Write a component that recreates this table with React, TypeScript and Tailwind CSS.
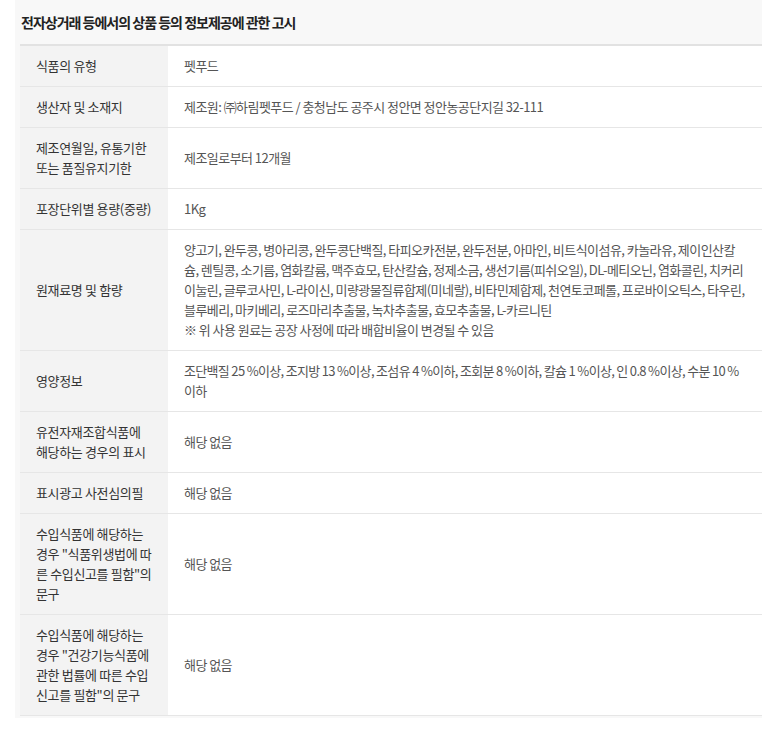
const rows: { label: string; value: React.ReactNode; tight?: boolean }[] = [
  { label: "식품의 유형", value: "펫푸드" },
  { label: "생산자 및 소재지", value: "제조원: ㈜하림펫푸드 / 충청남도 공주시 정안면 정안농공단지길 32-111" },
  { label: "제조연월일, 유통기한 또는 품질유지기한", value: "제조일로부터 12개월" },
  { label: "포장단위별 용량(중량)", value: "1Kg" },
  {
    label: "원재료명 및 함량",
    value: (
      <>
        양고기, 완두콩, 병아리콩, 완두콩단백질, 타피오카전분, 완두전분, 아마인, 비트식이섬유, 카놀라유, 제이인산칼슘, 렌틸콩, 소기름, 염화칼륨, 맥주효모, 탄산칼슘, 정제소금, 생선기름(피쉬오일), DL-메티오닌, 염화콜린, 치커리이눌린, 글루코사민, L-라이신, 미량광물질류합제(미네랄), 비타민제합제, 천연토코페롤, 프로바이오틱스, 타우린, 블루베리, 마키베리, 로즈마리추출물, 녹차추출물, 효모추출물, L-카르니틴
        <br />※ 위 사용 원료는 공장 사정에 따라 배합비율이 변경될 수 있음
      </>
    ),
  },
  {
    label: "영양정보",
    value: "조단백질 25 %이상, 조지방 13 %이상, 조섬유 4 %이하, 조회분 8 %이하, 칼슘 1 %이상, 인 0.8 %이상, 수분 10 %이하",
    tight: true,
  },
  { label: "유전자재조합식품에 해당하는 경우의 표시", value: "해당 없음" },
  { label: "표시광고 사전심의필", value: "해당 없음" },
  { label: "수입식품에 해당하는 경우 \"식품위생법에 따른 수입신고를 필함\"의 문구", value: "해당 없음" },
  { label: "수입식품에 해당하는 경우 \"건강기능식품에 관한 법률에 따른 수입신고를 필함\"의 문구", value: "해당 없음" },
];

export default function App() {
  return (
    <div className="min-h-screen bg-white font-['Noto_Sans_CJK_KR','Noto_Sans',sans-serif]">
      {/* notice panel */}
      <div className="ml-[15px] w-[747px] bg-[#f8f8f8] pb-[2px] pl-[5px]">
        <h2 className="flex h-[44px] items-center pl-[1px] text-[14px] font-bold tracking-[-1px] text-[#222]">
          전자상거래 등에서의 상품 등의 정보제공에 관한 고시
        </h2>
        <div className="border-t-2 border-[#e2e2e2] bg-white">
          {rows.map((r) => (
            <div key={r.label} className="flex border-b border-[#e6e6e6] text-[13px] leading-[20px]">
              <div className="flex w-[148px] shrink-0 items-center bg-[#f3f3f3] px-4 py-[10px] tracking-[-0.35px] text-[#333]">
                {r.label}
              </div>
              <div
                className={
                  r.tight
                    ? "flex flex-1 items-center px-4 py-[10px] tracking-[-0.68px] text-[#555]"
                    : "flex flex-1 items-center px-4 py-[10px] tracking-[-0.55px] text-[#555]"
                }
              >
                <div>{r.value}</div>
              </div>
            </div>
          ))}
        </div>
      </div>
    </div>
  );
}
